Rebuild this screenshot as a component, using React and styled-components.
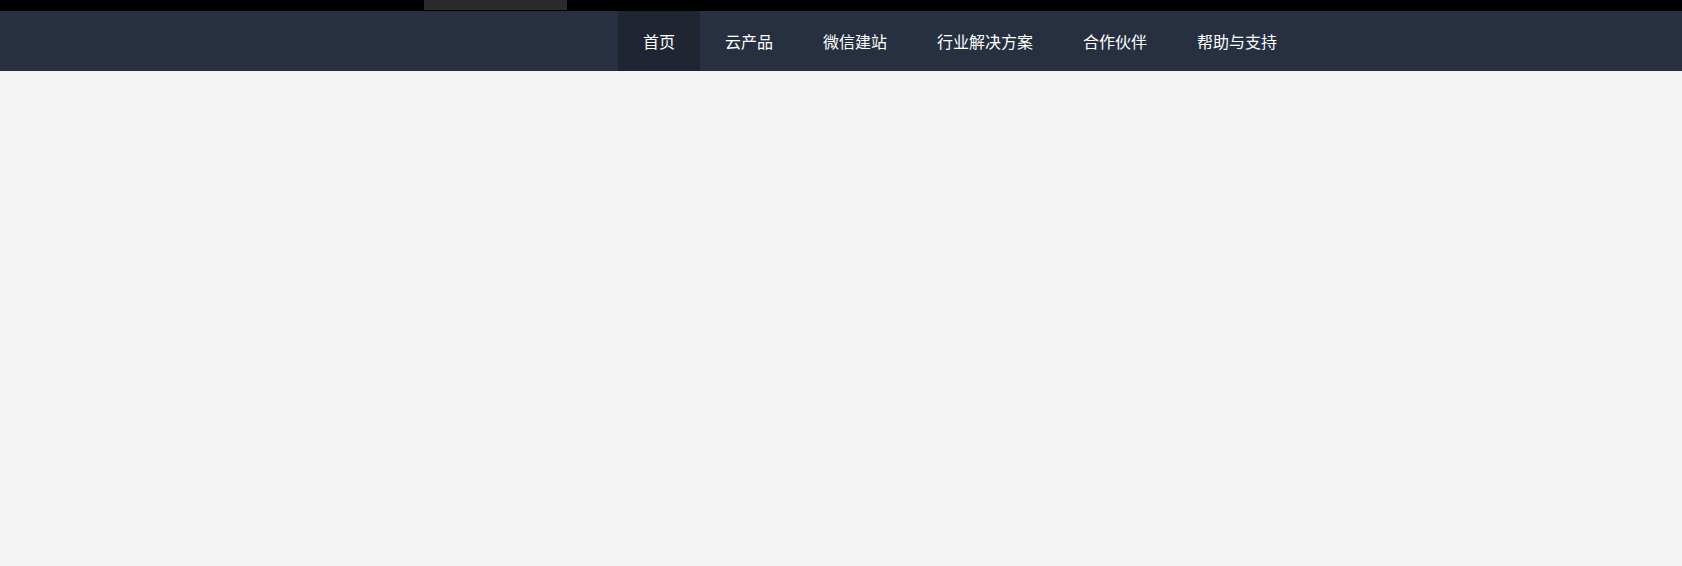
import React from "react";
import styled, { createGlobalStyle } from "styled-components";

const GlobalStyle = createGlobalStyle`
  html, body {
    margin: 0;
    padding: 0;
    background: #f4f4f4;
    font-family: "Noto Sans CJK SC", "Noto Sans", sans-serif;
  }
  * { box-sizing: border-box; }
`;

const TopBar = styled.div`
  height: 11px;
  background: #000;
  padding-left: 424px;
`;

const TopTab = styled.div`
  width: 143px;
  height: 10px;
  background: #2b2b2b;
`;

const NavBar = styled.nav`
  height: 60px;
  background: #263040;
  padding-left: 618px;
`;

const NavList = styled.ul`
  display: flex;
  margin: 0;
  padding: 0;
  list-style: none;
`;

const NavItem = styled.li`
  padding: 0 25px;
  height: 60px;
  line-height: 60px;
  font-size: 16px;
  color: #fff;
  white-space: nowrap;
  cursor: pointer;
  background: ${(p) => (p.$active ? "#1f2631" : "transparent")};
`;

const Body = styled.main`
  height: 495px;
  background: #f4f4f4;
`;

const items = ["首页", "云产品", "微信建站", "行业解决方案", "合作伙伴", "帮助与支持"];

const App = () => {
  return (
    <>
      <GlobalStyle />
      <TopBar>
        <TopTab />
      </TopBar>
      <NavBar>
        <NavList>
          {items.map((label, index) => (
            <NavItem key={label} $active={index === 0}>
              {label}
            </NavItem>
          ))}
        </NavList>
      </NavBar>
      <Body />
    </>
  );
};

export default App;
